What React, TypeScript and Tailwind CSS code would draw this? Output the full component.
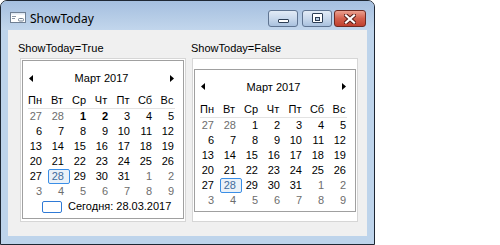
import React from "react";

type Day = { n: number; gray?: boolean; bold?: boolean; sel?: boolean };

const NAMES = ["Пн", "Вт", "Ср", "Чт", "Пт", "Сб", "Вс"];

function buildWeeks(bold: boolean): Day[] {
  const days: Day[] = [];
  days.push({ n: 27, gray: true }, { n: 28, gray: true });
  for (let i = 1; i <= 31; i++) {
    days.push({ n: i, bold: bold && (i === 1 || i === 2), sel: i === 28 });
  }
  for (let i = 1; i <= 9; i++) days.push({ n: i, gray: true });
  return days;
}

function LeftArrow() {
  return (
    <svg width="4" height="7" viewBox="0 0 4 7" className="block">
      <polygon points="4,0 0,3.5 4,7" fill="#000" />
    </svg>
  );
}

function RightArrow() {
  return (
    <svg width="4" height="7" viewBox="0 0 4 7" className="block">
      <polygon points="0,0 4,3.5 0,7" fill="#000" />
    </svg>
  );
}

function Calendar({ showToday, bold }: { showToday: boolean; bold: boolean }) {
  const days = buildWeeks(bold);
  return (
    <div
      className={`w-[162px] border border-[#a0a0a0] bg-white pt-[7px] text-[11px] text-black font-['Liberation_Sans',Arial,sans-serif] ${
        showToday ? "pb-[4px]" : "pb-[3px]"
      }`}
    >
      <div className="flex h-[20px] items-center pl-[6px] pr-[9px]">
        <LeftArrow />
        <div className="flex-1 text-center leading-[20px]">Март 2017</div>
        <RightArrow />
      </div>
      <div className="mt-[5px] ml-[3px] grid grid-cols-[repeat(7,22px)]">
        {NAMES.map((n) => (
          <div key={n} className="h-[15px] pr-[4px] text-center leading-[15px]">
            {n}
          </div>
        ))}
      </div>
      <div className="ml-[5px] h-px w-[147px] bg-[#e3e3e3]" />
      <div className="ml-[3px] grid grid-cols-[repeat(7,22px)]">
        {days.map((d, i) =>
          d.sel ? (
            <div
              key={i}
              className="h-[15px] rounded-[2px] border border-[#3a8ee6] bg-[#eaf1f8] pr-[5px] text-right leading-[13px] text-[#3f6b9c]"
            >
              {d.n}
            </div>
          ) : (
            <div
              key={i}
              className={`h-[15px] pr-[6px] text-right leading-[15px] ${
                d.gray ? "text-[#6d6d6d]" : "text-black"
              } ${d.bold ? "font-bold" : ""}`}
            >
              {d.n}
            </div>
          )
        )}
      </div>
      {showToday && (
        <div className="flex h-[15px] items-center pl-[19px]">
          <div className="h-[12px] w-[20px] rounded-[2px] border border-[#2f7ad6] bg-white" />
          <div className="ml-[6px] leading-[15px]">Сегодня: 28.03.2017</div>
        </div>
      )}
    </div>
  );
}

function FormIcon() {
  return (
    <svg width="16" height="11" viewBox="0 0 16 11" className="block">
      <rect x="0.5" y="0.5" width="15" height="10" fill="#ffffff" stroke="#6f7f93" />
      <rect x="1" y="1" width="14" height="1.5" fill="#dfe8f3" />
      <line x1="2" y1="4.5" x2="6" y2="4.5" stroke="#8a96a6" />
      <line x1="2" y1="6.5" x2="5" y2="6.5" stroke="#8a96a6" />
      <rect x="8.5" y="6.5" width="5" height="2.5" rx="1" fill="#ffffff" stroke="#6f7f93" />
    </svg>
  );
}

function CloseGlyph() {
  return (
    <svg width="12" height="10" viewBox="0 0 12 10" className="block">
      <path d="M2 1.5 L10 8.5 M10 1.5 L2 8.5" stroke="#5a1e18" strokeWidth="4.2" strokeLinecap="square" />
      <path d="M2 1.5 L10 8.5 M10 1.5 L2 8.5" stroke="#ffffff" strokeWidth="2.2" strokeLinecap="square" />
    </svg>
  );
}

export default function App() {
  return (
    <div className="flex h-[245px] w-[500px] bg-white">
      <div className="flex h-[245px] w-[375px] flex-col rounded-t-[7px] border border-[#1e2733] bg-[#bed4eb]">
        <div className="flex h-[29px] items-start rounded-t-[6px] bg-gradient-to-b from-[#a5bfdf] to-[#c2d6ec] pl-[9px] pr-[8px]">
          <div className="mt-[11px]">
            <FormIcon />
          </div>
          <div className="ml-[4px] mt-[10px] text-[12px] leading-[16px] text-black font-['Noto_Sans',sans-serif]">
            ShowToday
          </div>
          <div className="flex-1" />
          <div className="mt-[9px] flex">
            <div className="flex h-[17px] w-[30px] items-end justify-center rounded-[3px] border border-[#5f7491] bg-gradient-to-b from-[#e2ebf6] via-[#c9d9ec] to-[#a9c1de] pb-[3px]">
              <div className="h-[4px] w-[11px] rounded-[1px] border border-[#2c3e55] bg-white" />
            </div>
            <div className="ml-[4px] flex h-[17px] w-[30px] items-start justify-center rounded-[3px] border border-[#5f7491] bg-gradient-to-b from-[#e2ebf6] via-[#c9d9ec] to-[#a9c1de] pt-[2px]">
              <div className="flex h-[10px] w-[11px] items-center justify-center rounded-[1px] border border-[#2c3e55] bg-white pt-[1px]">
                <div className="h-[4px] w-[5px] border border-[#2c3e55] bg-[#b9cbe0]" />
              </div>
            </div>
            <div className="ml-[2px] flex h-[17px] w-[32px] items-center justify-center rounded-[3px] border border-[#6e2a22] bg-gradient-to-b from-[#eba08f] via-[#d3604d] to-[#c0402f]">
              <CloseGlyph />
            </div>
          </div>
        </div>
        <div className="mx-[7px] mb-[8px] flex flex-1 bg-[#f0f0f0] pl-[10px] pt-[10px] font-['Liberation_Sans',Arial,sans-serif] text-[11px] text-black">
          <div className="flex flex-col">
            <div className="h-[16px] leading-[16px]">ShowToday=True</div>
            <div className="ml-[2px] mt-[2px] h-[164px] w-[166px] border border-[#d6d6d6] bg-white p-[1px]">
              <Calendar showToday={true} bold={true} />
            </div>
          </div>
          <div className="ml-[5px] flex flex-col">
            <div className="h-[16px] leading-[16px]">ShowToday=False</div>
            <div className="ml-[1px] mt-[2px] flex h-[164px] w-[166px] items-center border border-[#d6d6d6] bg-white p-[1px]">
              <Calendar showToday={false} bold={false} />
            </div>
          </div>
        </div>
      </div>
    </div>
  );
}
